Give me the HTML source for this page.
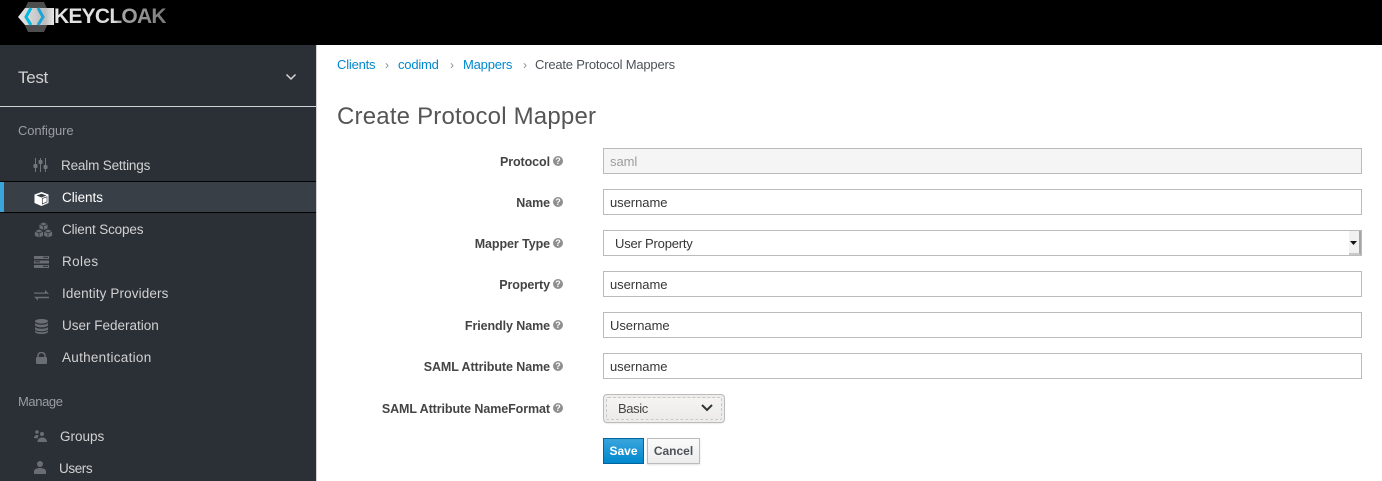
<!DOCTYPE html>
<html><head><meta charset="utf-8">
<style>
*{box-sizing:border-box}
html,body{margin:0;padding:0;width:1382px;height:481px;overflow:hidden;background:#fff;font-family:"Liberation Sans",sans-serif;font-size:13px;color:#363636}
.t{position:absolute;white-space:nowrap;line-height:18px;margin-top:1px}
.n{color:#d1d1d1;font-size:13.5px;letter-spacing:-.1px}
.b{background:#2b3037;position:absolute;left:0;top:45px;width:316px;height:436px}
.l{font-weight:700;font-size:12.5px;letter-spacing:-.08px;color:#444;text-align:right;right:832px}
.i{position:absolute;left:603px;width:759px;height:26px;border:1px solid #bbb;background:#fff;padding:0 6px;line-height:25px;font-size:13px;letter-spacing:-.05px}
.q{position:absolute;width:10px;height:10px;border-radius:50%;background:#8f8f8f;left:553px;color:#fff;font-size:9px;font-weight:700;line-height:10px;text-align:center}
.a{color:#0088ce;font-size:13px;letter-spacing:-.2px}
svg{position:absolute}
</style></head><body>
<div style="position:absolute;left:0;top:0;width:1382px;height:45px;background:#000"></div>
<svg style="left:0;top:0" width="60" height="34" viewBox="0 0 60 34">
<defs><linearGradient id="g" x1="0" x2="1"><stop offset="0" stop-color="#e6e6e6"/><stop offset=".75" stop-color="#bdbdbd"/><stop offset="1" stop-color="#e8e8e8"/></linearGradient></defs>
<polygon points="28,2 44,2 51,17 44,32 28,32 21,17" fill="#4d4d4d"/>
<polygon points="18,17 25,8 54,8 54,25 25,25" fill="url(#g)"/>
<path d="M31,8 L26,17 L31,25" fill="none" stroke="#00b8e3" stroke-width="3"/>
<path d="M38,8 L43,17 L38,25" fill="none" stroke="#19a5d8" stroke-width="3"/>
</svg>
<div class="t" style="left:54px;top:3px;font-size:21px;line-height:26px;font-weight:700;background:linear-gradient(90deg,#e6e6e6 0,#dcdcdc 54%,#a8a8a8 58%,#7a7a7a 100%);-webkit-background-clip:text;background-clip:text;color:transparent;letter-spacing:-.75px">KEYCLOAK</div>

<div class="b"></div>
<div style="position:absolute;left:316px;top:45px;width:1px;height:436px;background:#d1d1d1"></div>
<div class="t" style="left:18px;top:67px;font-size:17px;line-height:20px;color:#d1d1d1;letter-spacing:-.3px">Test</div>
<svg style="left:285px;top:73px" width="12" height="8"><path d="M1.5,1.5 L6,6 L10.5,1.5" fill="none" stroke="#d8d8d8" stroke-width="1.5"/></svg>
<div style="position:absolute;left:0;top:106px;width:316px;height:1px;background:#d1d1d1"></div>
<div class="t" style="left:18px;top:121px;color:#9a9da1;font-size:13px;letter-spacing:-.1px">Configure</div>

<div style="position:absolute;left:0;top:181px;width:316px;height:32px;background:#393f47;border-top:1px solid #030303;border-bottom:1px solid #030303"></div>
<div style="position:absolute;left:0;top:182px;width:4px;height:30px;background:#39a5dc"></div>

<svg style="left:33px;top:158px" width="15" height="14" fill="#72767b"><path d="M2,0h1v6h-1zM2,10h1v4h-1zM7,0h1v2h-1zM7,6h1v8h-1zM12,0h1v7h-1zM12,11h1v3h-1z"/><rect x="0.5" y="6" width="4" height="4" rx="1"/><rect x="5.5" y="2" width="4" height="4" rx="1"/><rect x="10.500" y="7" width="4" height="4" rx="1"/></svg>
<div class="t n" style="left:61px;top:156px;letter-spacing:-.17px">Realm Settings</div>

<svg style="left:34px;top:192px" width="15" height="14" viewBox="0 0 15 14"><polygon points="7.500,0 14.500,2.500 14.500,11 7.500,14 .5,11 .5,2.500" fill="#fff"/><path d="M2.500,3.500 L7.500,5.500 L12.500,3.500 L7.500,1.800z" fill="#393f47"/><path d="M8.300,6.500 L13,4.800 V10 L8.300,12z" fill="#fff" stroke="#393f47" stroke-width=".7"/></svg>
<div class="t n" style="left:62px;top:188px;color:#fff;letter-spacing:-.05px">Clients</div>

<svg style="left:34px;top:222px" width="19" height="16" viewBox="0 0 19 16" fill="#6a6e73" stroke="#2b3037" stroke-width=".8"><polygon points="9.500,0 14,2 14,6.500 9.500,8.500 5,6.500 5,2"/><polygon points="5,7 9.500,9 9.500,14 5,16 .5,14 .5,9"/><polygon points="14,7 18.500,9 18.500,14 14,16 9.800,14 9.800,9"/><path d="M5,2 L9.500,4 L14,2 M9.500,4 V8.500 M.5,9 L5,11 L9.500,9 M5,11 V16 M9.800,9 L14,11 L18.500,9 M14,11 V16" fill="none"/></svg>
<div class="t n" style="left:62px;top:220px;letter-spacing:-.15px">Client Scopes</div>

<svg style="left:34px;top:256px" width="15" height="12" fill="#6a6e73"><rect width="15" height="3"/><rect y="4.500" width="15" height="3"/><rect y="9" width="15" height="3"/><rect x="9" y=".8" width="5" height="1" fill="#2b3037"/><rect x="1" y="5.300" width="5" height="1" fill="#2b3037"/><rect x="9" y="9.800" width="5" height="1" fill="#2b3037"/></svg>
<div class="t n" style="left:62px;top:252px;letter-spacing:.4px">Roles</div>

<svg style="left:34px;top:290px" width="15" height="11" fill="#6a6e73"><path d="M0,2.500h11v-2.500l4,3.800h-15zM15,6.700h-15l4,3.800v-2.300h11z"/></svg>
<div class="t n" style="left:62px;top:284px;letter-spacing:.12px">Identity Providers</div>

<svg style="left:35px;top:319px" width="13" height="15" fill="#6a6e73"><ellipse cx="6.500" cy="2.300" rx="6.500" ry="2.300"/><path d="M0,4v2c0,1.200 3,2.300 6.500,2.300s6.500,-1.100 6.500,-2.300v-2c-1,1.200 -3.500,1.800 -6.500,1.800s-5.500,-.6 -6.500,-1.800z"/><path d="M0,8v2c0,1.200 3,2.300 6.500,2.300s6.500,-1.100 6.500,-2.300v-2c-1,1.200 -3.500,1.800 -6.500,1.800s-5.500,-.6 -6.500,-1.800z"/><path d="M0,11.500v1.200c0,1.200 3,2.300 6.500,2.300s6.500,-1.100 6.500,-2.300v-1.200c-1,1.200 -3.500,1.800 -6.500,1.800s-5.500,-.6 -6.500,-1.800z"/></svg>
<div class="t n" style="left:62px;top:316px;letter-spacing:0">User Federation</div>

<svg style="left:36px;top:352px" width="11" height="12" fill="#6a6e73"><rect y="5" width="11" height="7" rx="1"/><path d="M2,5.500v-2a3.500,3 0 0 1 7,0v2" fill="none" stroke="#6a6e73" stroke-width="1.500"/></svg>
<div class="t n" style="left:62px;top:348px;letter-spacing:.28px">Authentication</div>

<div class="t" style="left:18px;top:392px;color:#9a9da1;font-size:13px;letter-spacing:-.4px">Manage</div>

<svg style="left:34px;top:430px" width="13" height="12" fill="#6a6e73"><circle cx="3" cy="2" r="1.800"/><circle cx="8" cy="4" r="2"/><path d="M0,8c0,-3 4,-3.500 4.500,-2.500l-1,3z"/><path d="M3.500,12c0,-6 9.500,-6 9.500,0z"/></svg>
<div class="t n" style="left:60px;top:427px;letter-spacing:0">Groups</div>

<svg style="left:34px;top:461px" width="12" height="14" fill="#6a6e73"><circle cx="6" cy="3" r="3"/><path d="M0,13v-2.500c0,-2.500 3,-3.500 6,-3.500s6,1 6,3.500v2.500z"/></svg>
<div class="t n" style="left:59px;top:459px;letter-spacing:-.4px">Users</div>

<!-- breadcrumb -->
<div class="t a" style="left:337px;top:55px">Clients</div>
<div class="t" style="left:385px;top:55px;color:#8b8d8f;font-size:12px">›</div>
<div class="t a" style="left:398px;top:55px">codimd</div>
<div class="t" style="left:450px;top:55px;color:#8b8d8f;font-size:12px">›</div>
<div class="t a" style="left:463px;top:55px">Mappers</div>
<div class="t" style="left:523px;top:55px;color:#8b8d8f;font-size:12px">›</div>
<div class="t" style="left:535px;top:55px;color:#4d5258;font-size:13px;letter-spacing:-.2px">Create Protocol Mappers</div>

<div class="t" style="left:337px;top:101px;font-size:24px;line-height:30px;color:#555;letter-spacing:.2px">Create Protocol Mapper</div>

<!-- form -->
<div class="t l" style="top:152px">Protocol</div><div class="q" style="top:156px">?</div>
<div class="i" style="top:148px;background:#f5f5f5;color:#9c9c9c">saml</div>
<div class="t l" style="top:193px">Name</div><div class="q" style="top:197px">?</div>
<div class="i" style="top:189px">username</div>
<div class="t l" style="top:234px">Mapper Type</div><div class="q" style="top:238px">?</div>
<div class="i" style="top:230px;padding-left:11px;letter-spacing:-.2px">User Property</div>
<div style="position:absolute;left:1349px;top:231px;width:12px;height:24px;background:#f1f1f1;border-right:2px solid #a5a5a5;border-bottom:2px solid #c8c8c8"></div>
<svg style="left:1350px;top:241px" width="8" height="5"><polygon points="0,0 7,0 3.500,4" fill="#111"/></svg>
<div class="t l" style="top:275px">Property</div><div class="q" style="top:279px">?</div>
<div class="i" style="top:271px">username</div>
<div class="t l" style="top:316px">Friendly Name</div><div class="q" style="top:320px">?</div>
<div class="i" style="top:312px">Username</div>
<div class="t l" style="top:357px">SAML Attribute Name</div><div class="q" style="top:361px">?</div>
<div class="i" style="top:353px">username</div>
<div class="t l" style="top:399px">SAML Attribute NameFormat</div><div class="q" style="top:403px">?</div>

<div style="position:absolute;left:603px;top:394px;width:122px;height:29px;border:1px solid #bbb;border-radius:4px;background:#efedec;box-shadow:0 1px 1px rgba(0,0,0,.08)"></div>
<div style="position:absolute;left:606px;top:397px;width:116px;height:23px;border:1px dashed #c8c8c8;border-radius:2px;background:linear-gradient(#f5f4f3,#ecebe9)"></div>
<div class="t" style="left:618px;top:399px;letter-spacing:-.4px;color:#444">Basic</div>
<svg style="left:701px;top:404px" width="12" height="8"><path d="M1,1 L6,6 L11,1" fill="none" stroke="#2e3436" stroke-width="2"/></svg>

<div style="position:absolute;left:603px;top:438px;width:41px;height:26px;background:linear-gradient(#39a5dc,#0088ce);border:1px solid #00659c;color:#fff;font-weight:700;font-size:12px;line-height:25px;text-align:center">Save</div>
<div style="position:absolute;left:647px;top:438px;width:53px;height:26px;background:linear-gradient(#fafafa,#ededed);border:1px solid #bbb;color:#4d5258;font-weight:700;font-size:12px;line-height:25px;text-align:center;box-shadow:0 1px 2px rgba(0,0,0,.12)">Cancel</div>
</body></html>
